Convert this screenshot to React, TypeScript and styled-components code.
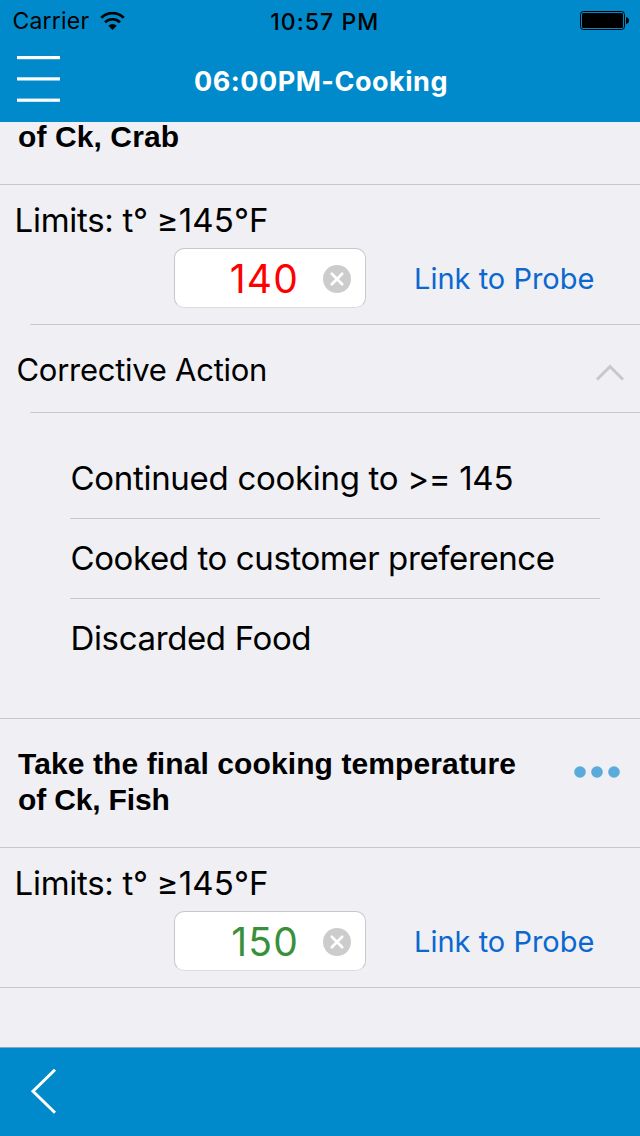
import React from "react";
import styled, { createGlobalStyle } from "styled-components";

const Global = createGlobalStyle`
  * { box-sizing: border-box; }
  body { margin: 0; font-family: Inter, "Liberation Sans", sans-serif; color: #000; background: #efeff4; }
  button { border: 0; padding: 0; background: none; font: inherit; color: inherit; display: flex; }
`;

const Screen = styled.div`
  width: 640px;
  height: 1136px;
  display: flex;
  flex-direction: column;
  overflow: hidden;
  background: #efeff4;
`;

const Header = styled.header`
  flex: none;
  height: 122px;
  background: #008acb;
`;

const StatusBar = styled.div`
  height: 40px;
  padding: 1px 11px 0 12.5px;
  display: grid;
  grid-template-columns: 1fr auto 1fr;
  align-items: center;
  font-size: 23px;
  line-height: 39px;
`;

const Carrier = styled.div`
  display: flex;
  align-items: center;
  gap: 11px;
  height: 39px;
`;

const Label = styled.span<{ $spacing?: number }>`
  white-space: pre;
  letter-spacing: ${(p) => p.$spacing ?? 0}px;
`;

const StatusText = styled(Label)`
  padding-top: 1px;
  line-height: 40px;
`;

const Clock = styled(StatusText)`
  height: 39px;
  font-weight: 500;
  padding-left: 8px;
`;

const BatteryIcon = styled.svg`
  justify-self: end;
`;

const NavBar = styled.div`
  height: 82px;
  padding: 0 15px 0 17px;
  display: grid;
  grid-template-columns: 44px 1fr 44px;
  align-items: center;
`;

const MenuButton = styled.button`
  align-self: start;
  padding-top: 16px;
`;

const Title = styled.h1`
  margin: 0;
  padding-top: 2px;
  text-align: center;
  color: #fff;
  font-size: 27px;
  font-weight: 700;
  line-height: 80px;
`;

const Content = styled.main`
  flex: 1;
  min-height: 0;
  display: flex;
  flex-direction: column;
`;

const Question = styled.div<{ $scrolled?: boolean }>`
  flex: none;
  height: ${(p) => (p.$scrolled ? 63 : 129)}px;
  padding: ${(p) => (p.$scrolled ? 0 : 27)}px 20px 0 18px;
  display: flex;
  justify-content: space-between;
  border-bottom: 1px solid #c8c7cc;
`;

const QuestionText = styled.h2<{ $tight?: boolean }>`
  margin: 0;
  font-family: "Liberation Sans", Arial, sans-serif;
  font-size: 30px;
  font-weight: 700;
  line-height: ${(p) => (p.$tight ? 30 : 36)}px;
`;

const MoreButton = styled.button`
  align-self: flex-start;
  padding-top: 20px;
`;

const Measurement = styled.section<{ $inset?: boolean }>`
  flex: none;
  height: 140px;
  display: flex;
  flex-direction: column;
  border-bottom: ${(p) => (p.$inset ? "0" : "1px solid #c8c7cc")};
`;

const Limits = styled.div`
  height: 63px;
  padding: 14px 0 0 14.6px;
  font-size: 33px;
  line-height: 42px;
`;

const EntryRow = styled.div`
  display: flex;
  align-items: center;
  padding-left: 174px;
`;

const Field = styled.div<{ $color: string }>`
  width: 192px;
  height: 60px;
  padding: 2px 14px 0 0;
  display: flex;
  align-items: center;
  justify-content: flex-end;
  gap: 24px;
  border: 1px solid #c8c7cc;
  border-bottom-color: #dcdce0;
  border-radius: 10px;
  background: #fff;
  color: ${(p) => p.$color};
  font-size: 39px;
  line-height: 56px;
`;

const ProbeLink = styled.button`
  && { color: #0a68cf; }
  margin-left: 48px;
  padding-top: 2px;
  font-size: 29px;
  line-height: 58px;
`;

const Accordion = styled.section`
  flex: none;
  height: 89px;
  margin-left: 30px;
  border: solid #c8c7cc;
  border-width: 1px 0;
  margin-top: -1px;
  padding: 7px 16px 0 0;
  display: flex;
  align-items: center;
  justify-content: space-between;
`;

const AccordionTitle = styled.div`
  margin-left: -13.5px;
  font-size: 31px;
  line-height: 40px;
  padding-bottom: 4px;
`;

const Options = styled.ul`
  flex: none;
  margin: 0;
  height: 306px;
  padding: 26px 40px 0 70px;
  list-style: none;
  border-bottom: 1px solid #c8c7cc;
`;

const Option = styled.li`
  height: 80px;
  padding-left: 0.5px;
  font-size: 33px;
  line-height: 79px;
  border-bottom: 1px solid #c8c7cc;
  &:last-child { border-bottom: 0; }
`;

const Footer = styled.footer`
  flex: none;
  height: 89px;
  border-top: 1px solid #8fa5b1;
  background: #008acb;
  padding: 20px 0 0 30px;
`;

function ClearIcon() {
  return (
    <svg width="28" height="28" viewBox="0 0 28 28">
      <circle cx="14" cy="14" r="14" fill="#ccc" />
      <path d="M8.800 8.800l10.400 10.400M19.200 8.800l-10.400 10.400" stroke="#fff" strokeWidth="2.700" strokeLinecap="round" />
    </svg>
  );
}

function TemperatureEntry({ value, color, inset }: { value: string; color: string; inset?: boolean }) {
  return (
    <Measurement $inset={inset}>
      <Limits>
        <Label $spacing={-0.28}>Limits: t° </Label>
        <Label $spacing={0.1}>≥145°F</Label>
      </Limits>
      <EntryRow>
        <Field $color={color}>
          <Label $spacing={1.2}>{value}</Label>
          <ClearIcon />
        </Field>
        <ProbeLink>
          <Label>Link to Probe</Label>
        </ProbeLink>
      </EntryRow>
    </Measurement>
  );
}

export default function App() {
  return (
    <Screen>
      <Global />
      <Header>
        <StatusBar>
          <Carrier>
            <StatusText $spacing={0.2}>Carrier</StatusText>
            <svg width="25" height="18" viewBox="0 0 25 18" fill="none" stroke="#000">
              <path d="M1.300 5.700a16 16 0 0 1 22.400 0" strokeWidth="2.900" />
              <path d="M5 10.300a10.700 10.700 0 0 1 15 0" strokeWidth="2.700" />
              <path d="M12.500 18l-4.200-4.300a6 6 0 0 1 8.400 0z" fill="#000" stroke="none" />
            </svg>
          </Carrier>
          <Clock $spacing={1.05}>10:57 PM</Clock>
          <BatteryIcon width="49" height="19" viewBox="0 0 49 19">
            <rect x="0.5" y="0.5" width="44" height="18" rx="3" fill="none" stroke="#000" />
            <rect x="2" y="2" width="41" height="15" rx="1.5" />
            <path d="M46 6c2 .3 3 1.600 3 3.500s-1 3.200-3 3.500z" />
          </BatteryIcon>
        </StatusBar>
        <NavBar>
          <MenuButton aria-label="Menu">
            <svg width="43" height="46" viewBox="0 0 43 46" fill="#fff">
              <rect y="0" width="43" height="3.200" />
              <rect y="21.300" width="43" height="3.200" />
              <rect y="42.600" width="43" height="3.200" />
            </svg>
          </MenuButton>
          <Title>
            <Label $spacing={0.5}>06:00PM-Cooking</Label>
          </Title>
        </NavBar>
      </Header>
      <Content>
        <Question $scrolled>
          <QuestionText $tight>
            <Label $spacing={0.1}>of Ck, Crab</Label>
          </QuestionText>
        </Question>
        <TemperatureEntry value="140" color="#ff0000" inset />
        <Accordion>
          <AccordionTitle>
            <Label $spacing={-0.27}>Corrective Action</Label>
          </AccordionTitle>
          <svg width="28" height="17" viewBox="0 0 28 17" fill="none" stroke="#c7c7cc" strokeWidth="3">
            <path d="M1 15.500L14 2.500l13 13" />
          </svg>
        </Accordion>
        <Options>
          <Option>
            <Label $spacing={-0.3}>Continued cooking to &gt;= 145</Label>
          </Option>
          <Option>
            <Label $spacing={-0.4}>Cooked to customer preference</Label>
          </Option>
          <Option>
            <Label $spacing={-0.36}>Discarded Food</Label>
          </Option>
        </Options>
        <Question>
          <QuestionText>
            <Label $spacing={0.1}>Take the final cooking temperature</Label>
            <br />
            <Label $spacing={-0.15}>of Ck, Fish</Label>
          </QuestionText>
          <MoreButton aria-label="More">
            <svg width="46" height="12" viewBox="0 0 46 12" fill="#5aabdc">
              <circle cx="6" cy="6" r="5.800" />
              <circle cx="23" cy="6" r="5.800" />
              <circle cx="40" cy="6" r="5.800" />
            </svg>
          </MoreButton>
        </Question>
        <TemperatureEntry value="150" color="#3a8f3a" />
      </Content>
      <Footer>
        <button aria-label="Back">
          <svg width="28" height="46" viewBox="0 0 28 46" fill="none" stroke="#fff" strokeWidth="3">
            <path d="M25 1.800L3 23.300l22 21.500" />
          </svg>
        </button>
      </Footer>
    </Screen>
  );
}
